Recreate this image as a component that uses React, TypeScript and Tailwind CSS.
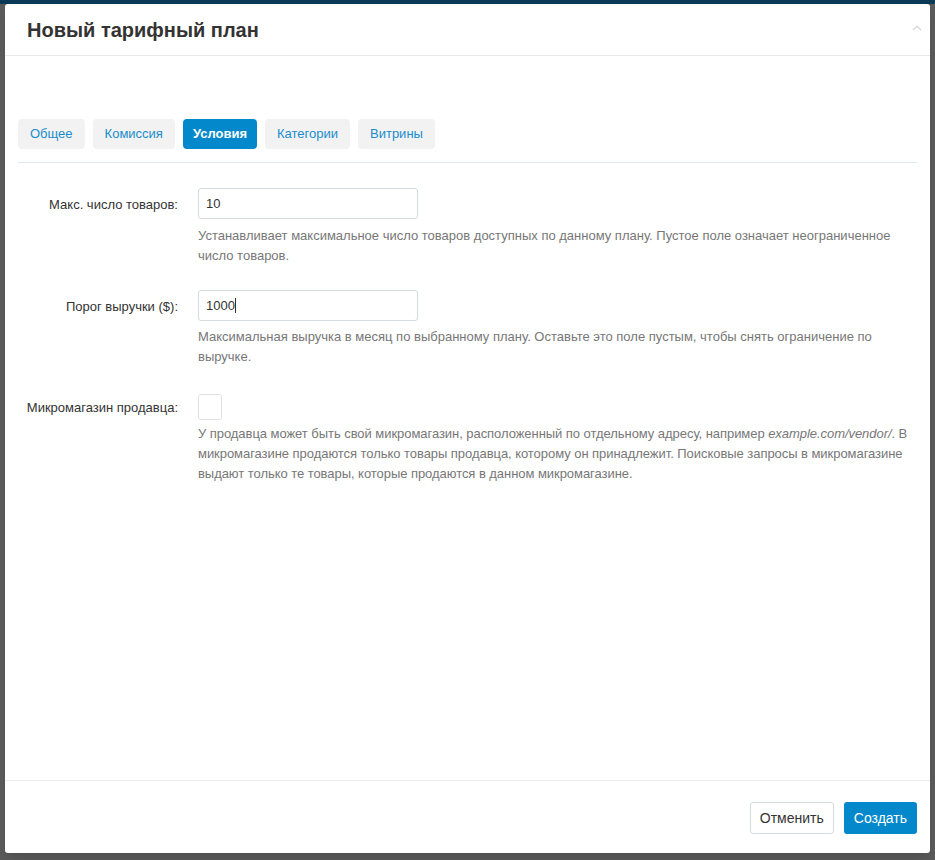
import React, { useState } from 'react';

const tabs = ['Общее', 'Комиссия', 'Условия', 'Категории', 'Витрины'];

const App: React.FC = () => {
  const [active, setActive] = useState('Условия');
  const [maxProducts, setMaxProducts] = useState('10');
  const [revenue, setRevenue] = useState('1000');
  const [storefront, setStorefront] = useState(false);

  return (
    <div
      className="w-[935px] h-[860px] bg-[#5b5b5b] relative overflow-hidden"
      style={{ fontFamily: '"Liberation Sans", Arial, sans-serif' }}
    >
      {/* dimmed page strip */}
      <div className="h-[4px] bg-[#0c3954]" />

      {/* Modal */}
      <div className="ml-[5px] w-[925px] h-[849px] bg-white rounded-[3px] flex flex-col shadow-lg">
        {/* Header */}
        <div className="h-[52px] flex items-center justify-between pl-[22px] pr-[8px] border-b border-[#e8e8e8]">
          <h3 className="text-[20px] font-bold text-[#333] pt-[1px]">Новый тарифный план</h3>
          <svg width="10" height="6" viewBox="0 0 10 6" className="mb-[4px]">
            <path d="M1 5 L5 1 L9 5" fill="none" stroke="#d6d6d6" strokeWidth="1.2" />
          </svg>
        </div>

        {/* Body */}
        <div className="flex-1 px-[13px] pt-[63px]">
          <div className="flex gap-[8px] pb-[13px] border-b border-[#dfe8ee]">
            {tabs.map((t) => (
              <button
                key={t}
                onClick={() => setActive(t)}
                className={
                  t === active
                    ? 'h-[30px] px-[10px] rounded-[4px] bg-[#0388cc] text-white text-[13px] font-bold'
                    : 'h-[30px] px-[12px] rounded-[4px] bg-[#f2f2f2] text-[#1a8ccd] text-[13px]'
                }
              >
                {t}
              </button>
            ))}
          </div>

          <div className="pt-[25px] text-[13px]">
            {/* Row 1 */}
            <div className="flex">
              <label className="w-[160px] text-right text-[#333] pt-[7px] shrink-0">Макс. число товаров:</label>
              <div className="ml-[20px] flex-1">
                <input
                  value={maxProducts}
                  onChange={(e) => setMaxProducts(e.target.value)}
                  className="w-[220px] h-[31px] border border-[#d4dbe0] rounded-[3px] px-[7px] text-[13px] text-[#333] outline-none"
                />
                <p className="text-[#777] leading-[20px] mt-[7px] pr-[20px]">
                  Устанавливает максимальное число товаров доступных по данному плану. Пустое поле означает неограниченное число товаров.
                </p>
              </div>
            </div>

            {/* Row 2 */}
            <div className="flex mt-[24px]">
              <label className="w-[160px] text-right text-[#333] pt-[7px] shrink-0">Порог выручки ($):</label>
              <div className="ml-[20px] flex-1">
                <div className="w-[220px] h-[31px] border border-[#d4dbe0] rounded-[3px] px-[7px] flex items-center text-[13px] text-[#333]">
                  <input
                    value={revenue}
                    onChange={(e) => setRevenue(e.target.value)}
                    size={4}
                    className="w-[30px] outline-none text-[13px] text-[#333]"
                  />
                  <span className="w-[1px] h-[15px] bg-[#333] -ml-[1px]" />
                </div>
                <p className="text-[#777] leading-[20px] mt-[6px] pr-[20px]">
                  Максимальная выручка в месяц по выбранному плану. Оставьте это поле пустым, чтобы снять ограничение по выручке.
                </p>
              </div>
            </div>

            {/* Row 3 */}
            <div className="flex mt-[26px]">
              <label className="w-[160px] text-right text-[#333] pt-[5px] shrink-0">Микромагазин продавца:</label>
              <div className="ml-[20px] flex-1">
                <button
                  onClick={() => setStorefront(!storefront)}
                  className="block w-[24px] h-[26px] border border-[#e2e2e2] rounded-[3px] bg-white mt-[1px]"
                >
                  {storefront && (
                    <svg viewBox="0 0 24 24" className="w-[16px] h-[16px] mx-auto">
                      <path d="M5 12l5 5 9-10" fill="none" stroke="#0388cc" strokeWidth="2.5" />
                    </svg>
                  )}
                </button>
                <p className="text-[#777] leading-[20px] mt-[4px] mr-[-6px] tracking-[-0.05px]">
                  У продавца может быть свой микромагазин, расположенный по отдельному адресу, например <i>example.com/vendor/</i>. В микромагазине продаются только товары продавца, которому он принадлежит. Поисковые запросы в микромагазине выдают только те товары, которые продаются в данном микромагазине.
                </p>
              </div>
            </div>
          </div>
        </div>

        {/* Footer */}
        <div className="h-[73px] border-t border-[#ececec] flex items-start justify-end gap-[10px] pt-[21px] pr-[13px]">
          <button className="h-[32px] px-[9px] border border-[#d4dbe0] rounded-[3px] bg-white text-[#333] text-[14px]">
            Отменить
          </button>
          <button className="h-[32px] px-[10px] rounded-[3px] bg-[#0388cc] text-white text-[14px]">
            Создать
          </button>
        </div>
      </div>
    </div>
  );
};

export default App;
